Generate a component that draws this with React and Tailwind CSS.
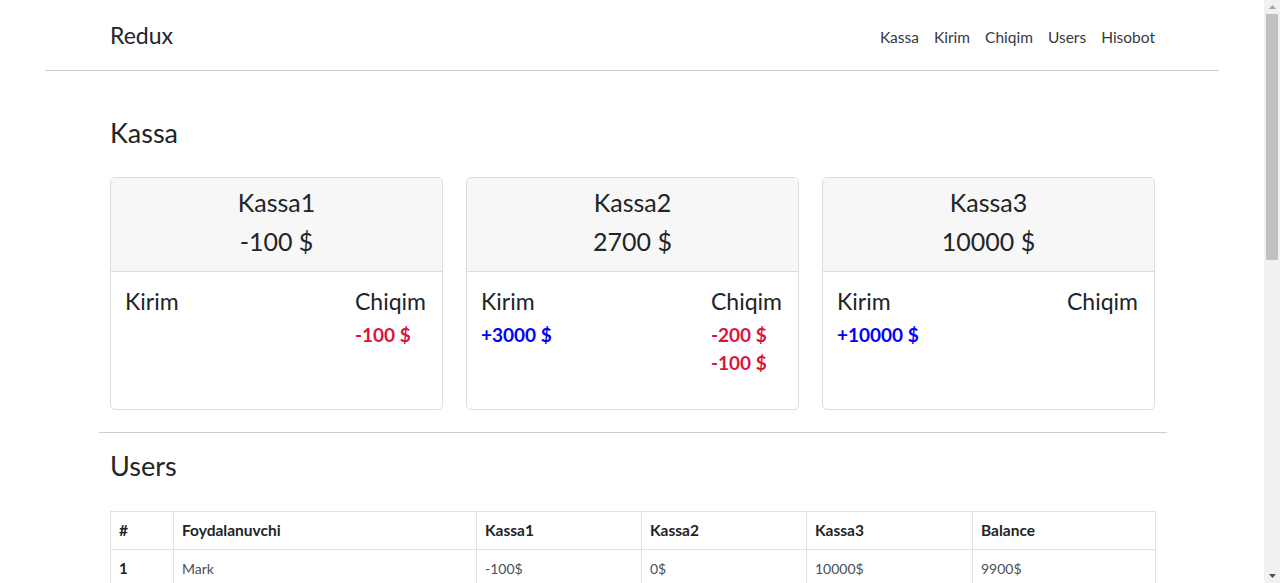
import React from "react";

const font = { fontFamily: "Lato, 'Liberation Sans', sans-serif" };

function Card({ name, total, kirim, chiqim }) {
  return (
    <div className="h-[233px] border border-[#dcdcdc] rounded-[5px] overflow-hidden flex flex-col">
      <div className="h-[94px] bg-[#f7f7f7] border-b border-[#dcdcdc] pt-[5px] text-center text-[25px] leading-[39px] text-[#212529]">
        <div>{name}</div>
        <div>{total}</div>
      </div>
      <div className="flex justify-between pl-[14px] pr-[16px] pt-[14px]">
        <div>
          <div className="text-[23px] leading-[30px] text-[#212529]">Kirim</div>
          <div className="mt-[5px] flex flex-col">
            {kirim.map((k, i) => (
              <div key={i} className="text-[19px] leading-[28px] font-bold text-[#0000ff]">{k}</div>
            ))}
          </div>
        </div>
        <div>
          <div className="text-[23px] leading-[30px] text-[#212529]">Chiqim</div>
          <div className="mt-[5px] flex flex-col">
            {chiqim.map((k, i) => (
              <div key={i} className="text-[19px] leading-[28px] font-bold text-[#dc143c]">{k}</div>
            ))}
          </div>
        </div>
      </div>
    </div>
  );
}

export default function App() {
  const cols = ["w-[63px]", "w-[303px]", "w-[165px]", "w-[165px]", "w-[166px]", "w-[183px]"];
  const head = ["#", "Foydalanuvchi", "Kassa1", "Kassa2", "Kassa3", "Balance"];
  const row = ["1", "Mark", "-100$", "0$", "10000$", "9900$"];
  return (
    <div className="flex h-[583px] overflow-hidden bg-white text-[#212529]" style={font}>
      <div className="w-[1264px] shrink-0">
        <nav className="ml-[45px] w-[1174px] h-[71px] border-b border-[#cfcfcf] pl-[65px] pr-[64px] flex items-center justify-between">
          <div className="text-[23px] text-[#212529]">Redux</div>
          <div className="flex gap-[15px] text-[15.5px] text-[#343a40] pt-[6px]">
            <span>Kassa</span>
            <span>Kirim</span>
            <span>Chiqim</span>
            <span>Users</span>
            <span>Hisobot</span>
          </div>
        </nav>
        <div className="w-[1045px] ml-[110px]">
          <h3 className="mt-[45px] text-[27px] leading-[34px]">Kassa</h3>
          <div className="mt-[27px] grid grid-cols-3 gap-[23px]">
            <Card name="Kassa1" total="-100 $" kirim={[]} chiqim={["-100 $"]} />
            <Card name="Kassa2" total="2700 $" kirim={["+3000 $"]} chiqim={["-200 $", "-100 $"]} />
            <Card name="Kassa3" total="10000 $" kirim={["+10000 $"]} chiqim={[]} />
          </div>
        </div>
        <div className="w-[1068px] ml-[99px] mt-[22px] border-t border-[#cfcfcf]" />
        <div className="w-[1045px] ml-[110px]">
          <h3 className="mt-[16px] text-[27px] leading-[34px]">Users</h3>
          <table className="mt-[28px] w-[1045px] border-collapse text-[14px] table-fixed">
            <thead>
              <tr>
                {head.map((h, i) => (
                  <th key={i} className={`${cols[i]} h-[38px] border border-[#dee2e6] px-[8px] text-left font-bold text-[15.5px]`}>{h}</th>
                ))}
              </tr>
            </thead>
            <tbody>
              <tr>
                {row.map((c, i) => (
                  <td key={i} className={`h-[38px] border border-[#dee2e6] px-[8px] ${i === 0 ? "font-bold text-[15px]" : "text-[#495057]"}`}>{c}</td>
                ))}
              </tr>
            </tbody>
          </table>
        </div>
      </div>
      <div className="w-[16px] shrink-0 h-[583px] bg-[#f1f1f1] flex flex-col items-center">
        <div className="h-[14px] flex items-center justify-center">
          <svg width="7" height="4" viewBox="0 0 7 4"><path d="M0 4 L3.5 0 L7 4 Z" fill="#a3a3a3" /></svg>
        </div>
        <div className="w-[12px] h-[246px] bg-[#c1c1c1]" />
        <div className="flex-1" />
        <div className="h-[14px] flex items-center justify-center">
          <svg width="7" height="4" viewBox="0 0 7 4"><path d="M0 0 L3.5 4 L7 0 Z" fill="#505050" /></svg>
        </div>
      </div>
    </div>
  );
}
